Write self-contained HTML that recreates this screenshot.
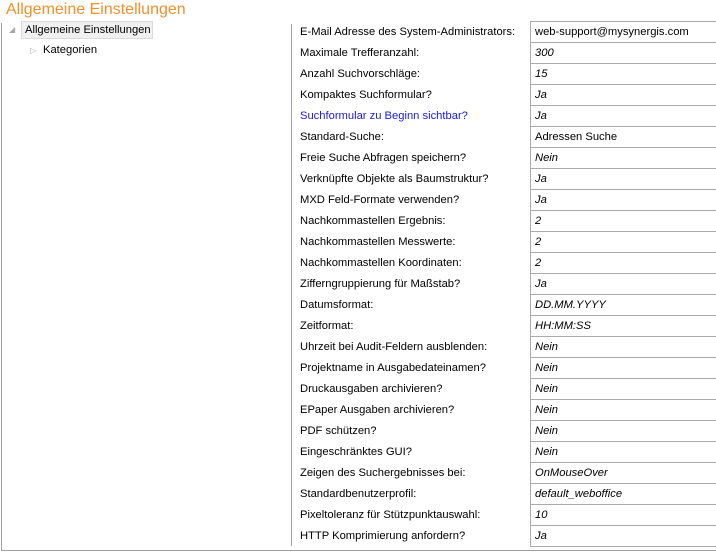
<!DOCTYPE html>
<html><head><style>
body{margin:0;width:716px;height:554px;background:#fff;font-family:"Liberation Sans",sans-serif;position:relative;overflow:hidden;font-size:11.2px;color:#000;white-space:nowrap}
.t{position:absolute;left:6px;top:1px;font-size:16px;color:#f0902a}
.lb{position:absolute;left:1px;top:23px;width:1px;height:528px;background:#a0a0a0}
.bb{position:absolute;left:1px;top:550px;width:715px;height:1px;background:#a0a0a0}
.vl{position:absolute;left:291px;top:24px;width:1px;height:522px;background:#a0a0a0}
.sel{position:absolute;left:21px;top:21px;width:132px;height:18px;background:#f0f0f0;border:1px solid #dadada;box-sizing:border-box;padding-left:3px;line-height:16px}
.kat{position:absolute;left:43px;top:44px}
.tri{position:absolute;font-size:8px;color:#aaa}
.r{position:absolute;left:0;height:21px;width:716px}
.l{position:absolute;left:300px;top:5px}
.v{position:absolute;left:530px;top:0;width:190px;height:22px;border:1px solid #ababab;box-sizing:border-box;padding-left:4px;line-height:21px}
.i{font-style:italic}
</style></head><body>
<div class="t">Allgemeine Einstellungen</div>
<div class="lb"></div><div class="bb"></div><div class="vl"></div>
<span class="tri" style="left:9px;top:25px">◢</span>
<div class="sel">Allgemeine Einstellungen</div>
<span class="tri" style="left:30px;top:46px">▷</span>
<div class="kat">Kategorien</div>
<div id="rows"></div>
<script>
var d=[["E-Mail Adresse des System-Administrators:","web-support@mysynergis.com",0],["Maximale Trefferanzahl:","300",1],["Anzahl Suchvorschläge:","15",1],["Kompaktes Suchformular?","Ja",1],["Suchformular zu Beginn sichtbar?","Ja",1],["Standard-Suche:","Adressen Suche",0],["Freie Suche Abfragen speichern?","Nein",1],["Verknüpfte Objekte als Baumstruktur?","Ja",1],["MXD Feld-Formate verwenden?","Ja",1],["Nachkommastellen Ergebnis:","2",1],["Nachkommastellen Messwerte:","2",1],["Nachkommastellen Koordinaten:","2",1],["Zifferngruppierung für Maßstab?","Ja",1],["Datumsformat:","DD.MM.YYYY",1],["Zeitformat:","HH:MM:SS",1],["Uhrzeit bei Audit-Feldern ausblenden:","Nein",1],["Projektname in Ausgabedateinamen?","Nein",1],["Druckausgaben archivieren?","Nein",1],["EPaper Ausgaben archivieren?","Nein",1],["PDF schützen?","Nein",1],["Eingeschränktes GUI?","Nein",1],["Zeigen des Suchergebnisses bei:","OnMouseOver",1],["Standardbenutzerprofil:","default_weboffice",1],["Pixeltoleranz für Stützpunktauswahl:","10",1],["HTTP Komprimierung anfordern?","Ja",1]];
var h="";d.forEach(function(x,i){h+='<div class="r" style="top:'+(21+21*i)+'px"><div class="l"'+(i==4?' style="color:#1a1ae0"':'')+'>'+x[0]+'</div><div class="v'+(x[2]?' i':'')+'">'+x[1]+'</div></div>';});
document.getElementById("rows").innerHTML=h;
</script>
</body></html>
